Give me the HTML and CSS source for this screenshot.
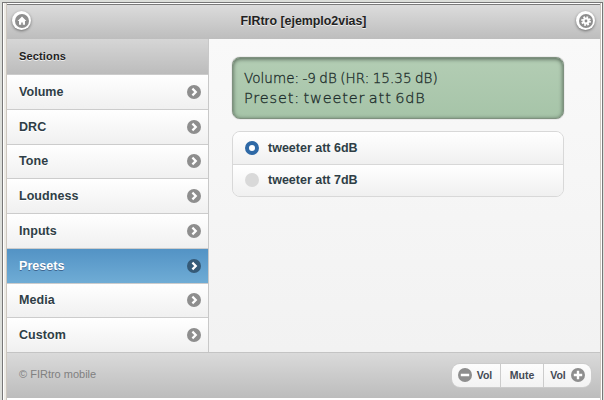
FILE: index.html
```html
<!DOCTYPE html>
<html lang="en">
<head>
<meta charset="utf-8">
<title>FIRtro</title>
<link rel="stylesheet" href="styles.css">
</head>
<body>
<svg class="defs" width="0" height="0">
  <symbol id="arrow" viewBox="0 0 14 14"><circle cx="7" cy="7" r="7" fill="var(--disc)"/><path d="M5.4 3.6 8.8 7 5.4 10.4" fill="none" stroke="#fff" stroke-width="2.2"/></symbol>
</svg>
<div class="frame">
<div class="page">
  <header class="header">
    <a class="round"><svg width="14" height="14" viewBox="0 0 14 14"><circle cx="7" cy="7" r="7" fill="#8e8e8e"/><path d="M7 2.6 2.6 7H4v3.8h2.2V8.4h1.6v2.4H10V7h1.4z" fill="#fff"/></svg></a>
    <h1>FIRtro [ejemplo2vias]</h1>
    <a class="round"><svg width="14" height="14" viewBox="0 0 14 14"><circle cx="7" cy="7" r="7" fill="#8e8e8e"/><circle cx="7" cy="7" r="4" fill="none" stroke="#fff" stroke-width="1.8" stroke-dasharray="1.7 1.4416"/><circle cx="7" cy="7" r="2.5" fill="none" stroke="#fff" stroke-width="2.2"/></svg></a>
  </header>
  <div class="middle">
    <nav class="menu">
      <div class="divider">Sections</div>
      <a class="item">Volume<svg><use href="#arrow"/></svg></a>
      <a class="item">DRC<svg><use href="#arrow"/></svg></a>
      <a class="item">Tone<svg><use href="#arrow"/></svg></a>
      <a class="item">Loudness<svg><use href="#arrow"/></svg></a>
      <a class="item">Inputs<svg><use href="#arrow"/></svg></a>
      <a class="item active">Presets<svg><use href="#arrow"/></svg></a>
      <a class="item">Media<svg><use href="#arrow"/></svg></a>
      <a class="item">Custom<svg><use href="#arrow"/></svg></a>
    </nav>
    <main class="content">
      <div class="lcd">
        <div class="level">Volume: -9 dB (HR: 15.35 dB)</div>
        <div class="preset">Preset: tweeter att 6dB</div>
      </div>
      <div class="choices">
        <label class="choice"><i class="radio on"></i>tweeter att 6dB</label>
        <label class="choice"><i class="radio"></i>tweeter att 7dB</label>
      </div>
    </main>
  </div>
  <footer class="footer">
    <span>© FIRtro mobile</span>
    <div class="buttons">
      <a class="btn down"><svg width="14" height="14" viewBox="0 0 14 14"><circle cx="7" cy="7" r="7" fill="#8e8e8e"/><path d="M2.8 7h8.4" stroke="#fff" stroke-width="2.4"/></svg>Vol</a>
      <a class="btn mute">Mute</a>
      <a class="btn up">Vol<svg width="14" height="14" viewBox="0 0 14 14"><circle cx="7" cy="7" r="7" fill="#8e8e8e"/><path d="M2.8 7h8.4M7 2.8v8.4" stroke="#fff" stroke-width="2.4"/></svg></a>
    </div>
  </footer>
</div>
</div>
</body>
</html>
```

FILE: styles.css
```css
* { box-sizing: border-box; }
body {
  margin: 0;
  height: 400px;
  overflow: hidden;
  padding: 2px 1px 0 2px;
  background: #dcdeda;
  font-family: "Liberation Sans", Arial, sans-serif;
  color: #222;
}
.defs { display: block; position: absolute; }
.frame {
  height: 398px;
  border: solid #777;
  border-width: 1px 1px 0;
  padding: 1px 2px 0 4px;
  background: linear-gradient(90deg, #fff 0 1px, #eeece6 1px 3px, #cdc7bf 3px 4px, #fff 4px calc(100% - 2px), #cdc7bf calc(100% - 2px) calc(100% - 1px), #fff calc(100% - 1px));
}
.page {
  display: flex;
  flex-direction: column;
  height: 394px;
  border-top: 1px solid #7a7a7a;
  background: #f4f4f4;
}
.header {
  display: flex;
  justify-content: space-between;
  align-items: center;
  height: 34px;
  padding: 0 5px 3px;
  background: linear-gradient(#dcdcdc, #bdbdbd);
  text-shadow: 0 1px 0 #eee;
}
h1 { margin: 0; font-size: 12.4px; line-height: 16px; padding-top: 1px; }
.round {
  width: 19px;
  height: 19px;
  border-radius: 50%;
  background: #fff;
  padding: 2.5px;
  box-shadow: 0 1px 3px rgba(0, 0, 0, .45);
}
.round svg { display: block; }
.middle { display: flex; height: 313px; }
.menu { width: 202px; border-right: 1px solid #c8c8c8; }
.divider {
  height: 35px;
  padding-left: 12px;
  line-height: 34px;
  font-size: 11px;
  font-weight: bold;
  letter-spacing: .15px;
  background: linear-gradient(#d6d6d6, #bcbcbc);
  text-shadow: 0 1px 0 #eee;
}
.item {
  --disc: #8e8e8e;
  display: flex;
  justify-content: space-between;
  align-items: center;
  height: 34.75px;
  padding: 0 7.5px 0 12px;
  border-top: 1px solid #ccc;
  background: linear-gradient(#fff, #f0f0f0);
  color: #2f3e46;
  font-size: 12.5px;
  font-weight: bold;
  letter-spacing: .05px;
  text-shadow: 0 1px 0 #fff;
}
.item svg { width: 14px; height: 14px; }
.active {
  --disc: #355a77;
  background: linear-gradient(#5393c5, #6facd5);
  color: #fff;
  text-shadow: 0 1px 0 #3e6790;
}
.content {
  flex: 1;
  padding: 18px 36px 0 23px;
  background: linear-gradient(#f9f9f9, #f2f2f2);
}
.lcd {
  height: 62px;
  padding: 10px 10px 0 11px;
  border: 1px solid #7f917f;
  border-radius: 8px;
  background: linear-gradient(#b3cdb4, #a6c4a8);
  box-shadow: inset 0 1px 4px #4c5c4e, 0 0 1px #777;
  font: 200 13.5px/20px "DejaVu Sans", sans-serif;
  color: #1c2d2b;
  -webkit-text-stroke: .3px #1c2d2b;
  white-space: nowrap;
}
.level { letter-spacing: .05px; word-spacing: -1px; }
.preset { font-size: 14.5px; letter-spacing: .85px; word-spacing: -2px; }
.choices {
  margin-top: 12px;
  border: 1px solid #d8d8d8;
  border-radius: 8px;
  overflow: hidden;
}
.choice {
  display: flex;
  align-items: center;
  height: 32px;
  padding-left: 12px;
  background: linear-gradient(#fff, #f0f0f0);
  color: #2f3e46;
  font-size: 12.5px;
  font-weight: bold;
}
.choice + .choice {
  padding-bottom: 2px;
  border-top: 1px solid #d8d8d8;
}
.radio {
  width: 14px;
  height: 14px;
  margin-right: 9px;
  border-radius: 50%;
  background: #d9d9d9;
}
.on { background: #fff; border: 4px solid #2f69a6; }
.footer {
  display: flex;
  justify-content: space-between;
  align-items: center;
  height: 46px;
  padding: 0 8px 0 12px;
  border-top: 1px solid #c4c4c4;
  background: linear-gradient(#dadada, #bcbcbc);
  color: #808080;
  font-size: 11px;
}
.footer span { padding-bottom: 4px; }
.buttons {
  display: flex;
  height: 25px;
  border: 1px solid #ccc;
  border-radius: 9px;
  overflow: hidden;
}
.btn {
  display: flex;
  align-items: center;
  justify-content: center;
  padding-bottom: 1px;
  background: linear-gradient(#fdfdfd, #f2f2f2);
  color: #444a55;
  font-size: 10.5px;
  font-weight: bold;
}
.btn + .btn { border-left: 1px solid #ccc; }
.down { width: 48px; gap: 5px; padding-right: 2px; }
.mute { width: 43px; }
.up { width: 48px; gap: 5px; }
```
